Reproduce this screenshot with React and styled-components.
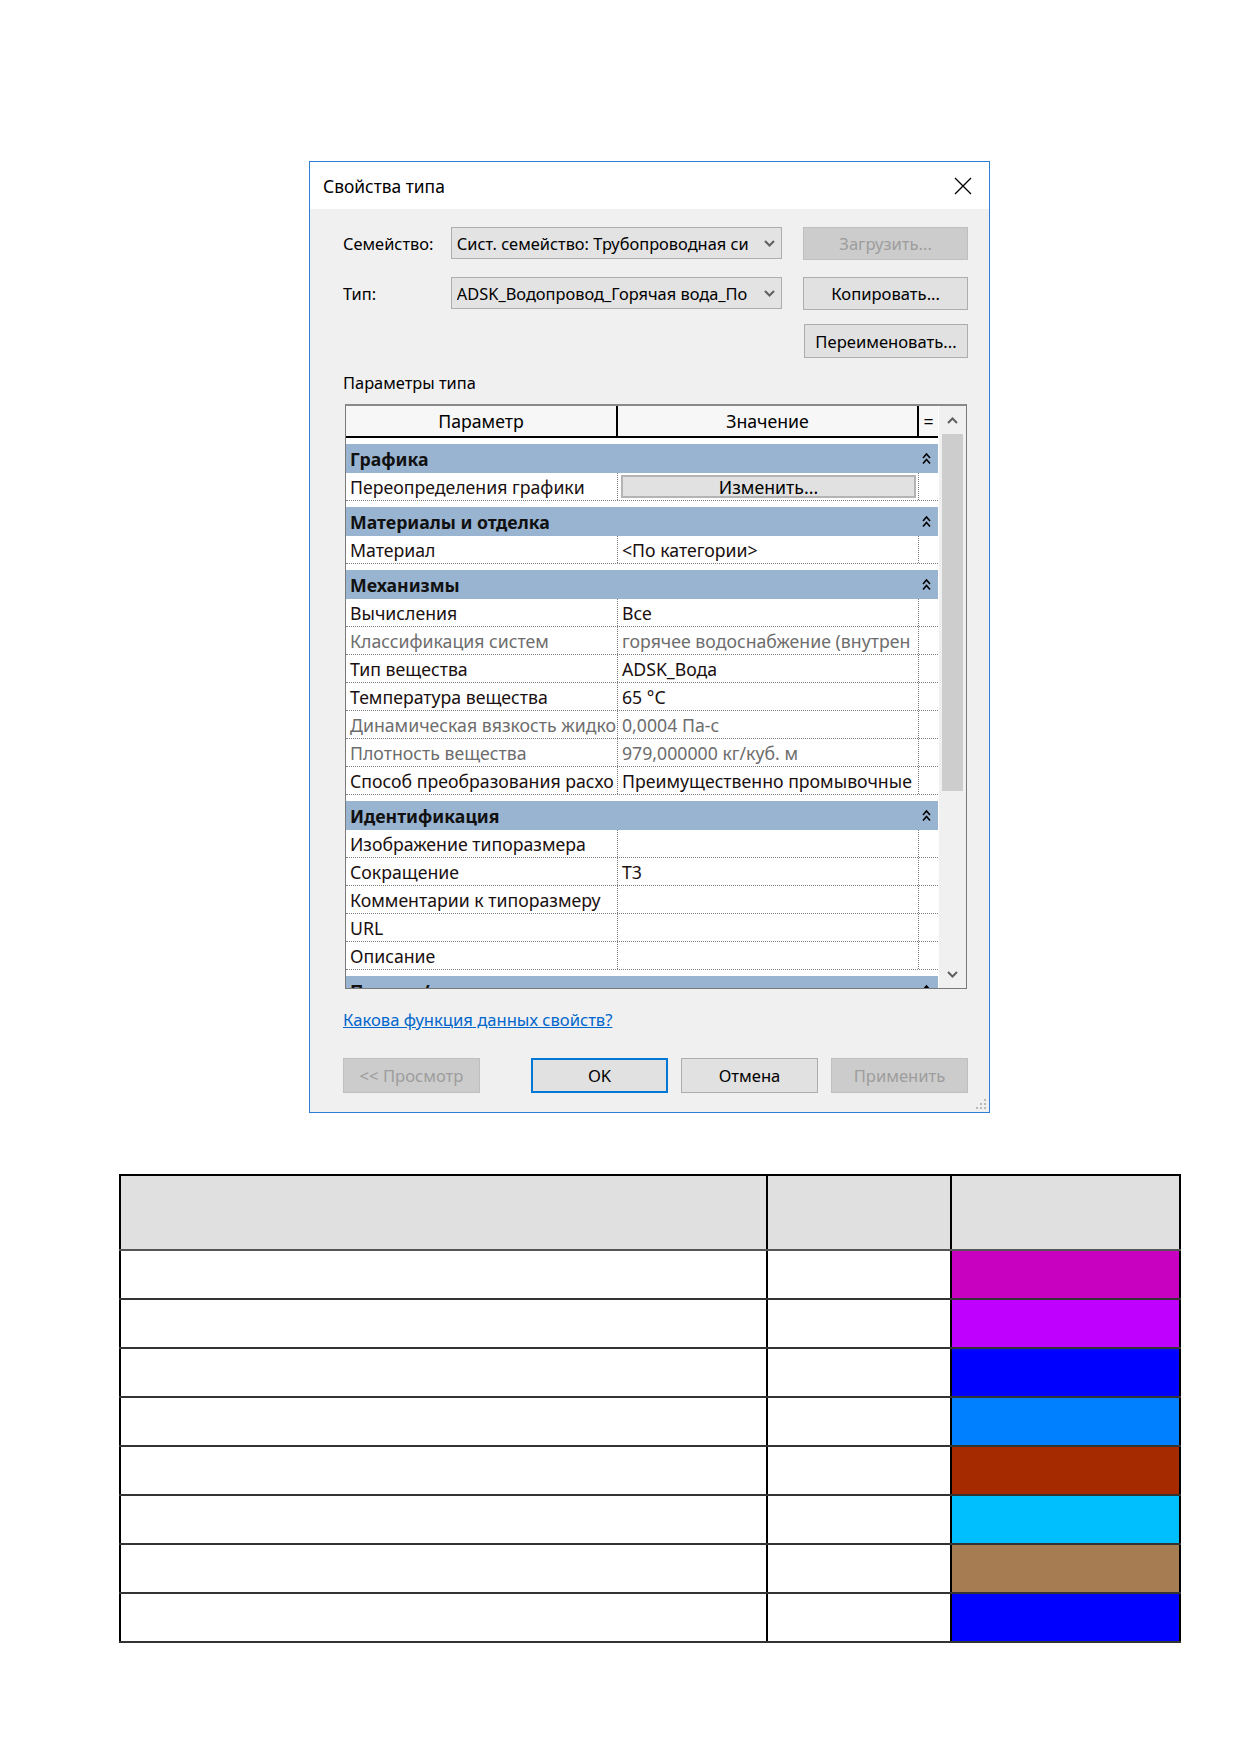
import React from 'react';
import styled, {createGlobalStyle} from 'styled-components';

const GlobalStyle = createGlobalStyle`
    html, body { margin:0; padding:0; background:#fff; }
    body { font-family:"Noto Sans", "Open Sans", sans-serif; color:#000; }
    * { box-sizing:border-box; }
`;

const Page = styled.div`
    padding-top:161px;
    padding-bottom:100px;
    display:flex;flex-direction:column;
`;

const Dialog = styled.div`
    width:681px;margin-left:309px;
    border:1px solid #2d7fd4;background:#f0f0f0;
`;

const TitleBar = styled.div`
    height:47px;background:#fff;
    display:flex;align-items:center;justify-content:space-between;
    padding:0 17px 0 13px;
    font-size:17.4px;color:#000;
`;

const Body = styled.div`
    padding:17px 21px 19px 33px;
    font-size:16.4px;
`;

const FormRow = styled.div`
    height:34px;margin-top:${p => p.$top || 0}px;
    display:flex;align-items:center;
`;

const Label = styled.div`
    width:108px;color:#000;
`;

const Select = styled.div`
    width:332px;height:32px;
    background:#e3e3e3;border:1px solid #adadad;
    display:flex;align-items:center;
    padding:0 6px 0 5px;
    span{ flex:1;white-space:nowrap;overflow:hidden; }
    svg{ margin-left:8px;flex:none; }
`;

const Button = styled.button`
    font-family:inherit;font-size:16.6px;
    width:${p => p.$w || 137}px;height:${p => p.$h || 33}px;
    margin-left:${p => p.$ml || 0}px;
    background:${p => p.$disabled ? '#cccccc' : '#e1e1e1'};
    color:${p => p.$disabled ? '#9d9d9d' : '#000'};
    border:${p => p.$primary ? '2px solid #0078d7' : p.$disabled ? '1px solid #bfbfbf' : '1px solid #adadad'};
    padding:0;
`;

const SectionCaption = styled.div`
    margin-top:15px;height:20px;line-height:20px;
`;

const Grid = styled.div`
    margin-top:11px;margin-left:2px;width:622px;height:585px;
    border:1px solid #7a7a7a;border-top:2px solid #8a8a8a;
    background:#fff;display:flex;overflow:hidden;
    font-size:17.7px;
`;

const GridMain = styled.div`
    flex:1;display:flex;flex-direction:column;overflow:hidden;
`;

const HeaderRow = styled.div`
    height:32px;flex:none;display:flex;
    background:#f7f7f7;border-bottom:2px solid #000;
`;

const HeadCell = styled.div`
    width:${p => p.$w}px;flex:none;
    display:flex;align-items:center;justify-content:center;
    border-right:${p => p.$last ? 'none' : '2px solid #000'};
`;

const Group = styled.div`
    height:29px;flex:none;margin-top:6px;
    background:#99b4d1;display:flex;align-items:center;
    padding-left:4px;font-weight:700;color:#111;
    span{ flex:1;white-space:nowrap; }
    svg{ margin-right:7px; }
`;

const DataRow = styled.div`
    height:28px;flex:none;display:flex;
    border-bottom:1px dotted #7c7c7c;
    color:${p => p.$muted ? '#6d6d6d' : '#1a1010'};
`;

const Cell = styled.div`
    width:${p => p.$w}px;flex:none;
    display:flex;align-items:center;
    padding-left:${p => p.$pad ?? 4}px;
    white-space:nowrap;overflow:hidden;
    border-right:${p => p.$last ? 'none' : '1px dotted #7c7c7c'};
`;

const EditButton = styled.div`
    width:295px;height:23px;flex:none;
    background:#e1e1e1;border:2px solid #b4b4b4;
    display:flex;align-items:center;justify-content:center;
    color:#000;
`;

const Scrollbar = styled.div`
    width:28px;flex:none;background:#f0f0f0;
    border-left:1px solid #fff;
    display:flex;flex-direction:column;align-items:center;
`;

const ScrollArrow = styled.div`
    height:28px;width:100%;flex:none;
    display:flex;align-items:center;justify-content:center;
`;

const Thumb = styled.div`
    width:21px;height:357px;background:#cdcdcd;flex:none;
`;

const Spacer = styled.div`flex:1;`;

const HelpLink = styled.a`
    display:block;margin-top:21px;height:20px;line-height:20px;
    color:#0066cc;text-decoration:underline;font-size:16.6px;
    cursor:pointer;
`;

const Footer = styled.div`
    margin-top:28px;display:flex;align-items:center;
`;

const FooterRight = styled.div`
    margin-left:auto;display:flex;gap:13px;
`;

const Grip = styled.div`
    height:0;position:relative;
    svg{ position:absolute;right:-19px;bottom:-17px; }
`;

const Legend = styled.table`
    margin:61px 0 0 119px;width:1062px;
    border-collapse:collapse;border:2px solid #000;
    td{
        border-left:2px solid #000;border-right:2px solid #000;
        border-bottom:2px solid #333;height:49px;padding:0;
    }
    thead td{ height:75px;background:#e0e0e0;border-bottom:2px solid #555; }
`;

const Swatch = styled.td`
    background:${p => p.$color};
`;

const GroupChevron = () => (
    <svg width="9" height="13" viewBox="0 0 9 13">
        <polyline points="1,6 4.5,2 8,6" fill="none" stroke="#000" strokeWidth="1.6" />
        <polyline points="1,11.5 4.5,7.5 8,11.5" fill="none" stroke="#000" strokeWidth="1.6" />
    </svg>
);

const SmallChevron = ({up}) => (
    <svg width="11" height="7" viewBox="0 0 11 7">
        <polyline points={up ? '1,6 5.5,1.5 10,6' : '1,1 5.5,5.5 10,1'} fill="none" stroke="#606060" strokeWidth="2" />
    </svg>
);

const COL = [272, 301, 19];

// texts are cut where the dialog itself cuts them
const groups = [
    {title:'Графика', rows:[{p:'Переопределения графики', button:'Изменить...'}]},
    {title:'Материалы и отделка', rows:[{p:'Материал', v:'<По категории>'}]},
    {title:'Механизмы', rows:[
        {p:'Вычисления', v:'Все'},
        {p:'Классификация систем', v:'горячее водоснабжение (внутрен', muted:true},
        {p:'Тип вещества', v:'ADSK_Вода'},
        {p:'Температура вещества', v:'65 °C'},
        {p:'Динамическая вязкость жидко', v:'0,0004 Па-с', muted:true},
        {p:'Плотность вещества', v:'979,000000 кг/куб. м', muted:true},
        {p:'Способ преобразования расхо', v:'Преимущественно промывочные'},
    ]},
    {title:'Идентификация', rows:[
        {p:'Изображение типоразмера', v:''},
        {p:'Сокращение', v:'Т3'},
        {p:'Комментарии к типоразмеру', v:''},
        {p:'URL', v:''},
        {p:'Описание', v:''},
    ]},
    {title:'Подъем/спуск', rows:[]},
];

const swatches = ['#c800c0', '#bf00ff', '#0000ff', '#0080ff', '#a52a00', '#00bfff', '#a67c52', '#0000ff'];

const App = () => {
    return (
        <Page>
            <GlobalStyle />
            <Dialog>
                <TitleBar>
                    <span>Свойства типа</span>
                    <svg width="18" height="18" viewBox="0 0 18 18">
                        <path d="M1 1 L17 17 M17 1 L1 17" stroke="#000" strokeWidth="1.3" />
                    </svg>
                </TitleBar>
                <Body>
                    <FormRow>
                        <Label>Семейство:</Label>
                        <Select>
                            <span>Сист. семейство: Трубопроводная си</span>
                            <SmallChevron />
                        </Select>
                        <Button $w={165} $ml={21} $disabled>Загрузить...</Button>
                    </FormRow>
                    <FormRow $top={16}>
                        <Label>Тип:</Label>
                        <Select>
                            <span>ADSK_Водопровод_Горячая вода_По</span>
                            <SmallChevron />
                        </Select>
                        <Button $w={165} $ml={21}>Копировать...</Button>
                    </FormRow>
                    <FormRow $top={14}>
                        <Button $w={165} $h={34} $ml={461}>Переименовать...</Button>
                    </FormRow>
                    <SectionCaption>Параметры типа</SectionCaption>
                    <Grid>
                        <GridMain>
                            <HeaderRow>
                                <HeadCell $w={COL[0]}>Параметр</HeadCell>
                                <HeadCell $w={COL[1]}>Значение</HeadCell>
                                <HeadCell $w={COL[2]} $last>=</HeadCell>
                            </HeaderRow>
                            {groups.map(g => (
                                <React.Fragment key={g.title}>
                                    <Group>
                                        <span>{g.title}</span>
                                        <GroupChevron />
                                    </Group>
                                    {g.rows.map(r => (
                                        <DataRow key={r.p} $muted={r.muted}>
                                            <Cell $w={COL[0]}>{r.p}</Cell>
                                            <Cell $w={COL[1]} $pad={r.button ? 3 : 4}>
                                                {r.button ? <EditButton>{r.button}</EditButton> : r.v}
                                            </Cell>
                                            <Cell $w={COL[2]} $last />
                                        </DataRow>
                                    ))}
                                </React.Fragment>
                            ))}
                        </GridMain>
                        <Scrollbar>
                            <ScrollArrow><SmallChevron up /></ScrollArrow>
                            <Thumb />
                            <Spacer />
                            <ScrollArrow><SmallChevron /></ScrollArrow>
                        </Scrollbar>
                    </Grid>
                    <HelpLink>Какова функция данных свойств?</HelpLink>
                    <Footer>
                        <Button $h={35} $disabled>&lt;&lt; Просмотр</Button>
                        <FooterRight>
                            <Button $h={35} $primary>OK</Button>
                            <Button $h={35}>Отмена</Button>
                            <Button $h={35} $disabled>Применить</Button>
                        </FooterRight>
                    </Footer>
                    <Grip>
                        <svg width="12" height="12" viewBox="0 0 12 12">
                            {[[10, 2], [10, 6], [6, 6], [10, 10], [6, 10], [2, 10]].map(([x, y]) => (
                                <rect key={x + '-' + y} x={x - 1} y={y - 1} width="2" height="2" fill="#b8b8b8" />
                            ))}
                        </svg>
                    </Grip>
                </Body>
            </Dialog>
            <Legend>
                <colgroup>
                    <col style={{width: 648}} />
                    <col style={{width: 185}} />
                    <col style={{width: 229}} />
                </colgroup>
                <thead>
                    <tr><td /><td /><td /></tr>
                </thead>
                <tbody>
                    {swatches.map((c, i) => (
                        <tr key={i}>
                            <td />
                            <td />
                            <Swatch $color={c} />
                        </tr>
                    ))}
                </tbody>
            </Legend>
        </Page>
    );
};

export default App;
